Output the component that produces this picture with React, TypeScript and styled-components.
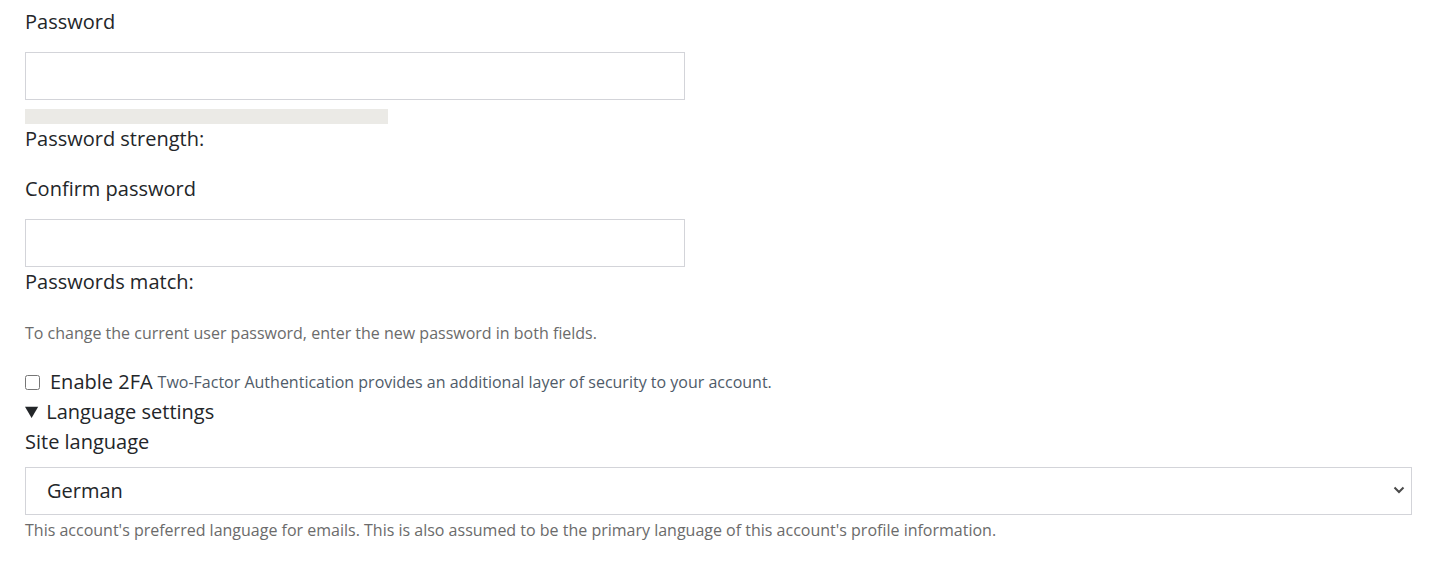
import styled, { createGlobalStyle } from "styled-components";

const GlobalStyle = createGlobalStyle`
    html, body {
        margin: 0;
        padding: 0;
        background: #fff;
    }
    body {
        font-family: "Open Sans", "DejaVu Sans", sans-serif;
        color: #232629;
    }
`;

const Form = styled.form`
    display: flex;
    flex-direction: column;
    padding: 9px 18px 0 25px;
`;

const Label = styled.label<{ gap?: number; top?: number }>`
    display: block;
    font-size: 20px;
    line-height: 26px;
    margin-top: ${(props) => props.top ?? 0}px;
    margin-bottom: ${(props) => props.gap ?? 0}px;
`;

const TextInput = styled.input`
    box-sizing: border-box;
    width: 660px;
    height: 48px;
    border: 1px solid #d3d4d9;
    border-radius: 0;
    padding: 0 20px;
    font-family: inherit;
    font-size: 18px;
    background: #fff;
    outline: none;
`;

const StrengthBar = styled.div`
    width: 363px;
    height: 15px;
    margin-top: 9px;
    background-color: #ebeae6;
`;

const Status = styled.div<{ top: number }>`
    font-size: 20px;
    line-height: 26px;
    margin-top: ${(props) => props.top}px;
`;

const Description = styled.div<{ top: number }>`
    font-size: 16px;
    line-height: 22px;
    color: #6b6b6b;
    margin-top: ${(props) => props.top}px;
`;

const CheckRow = styled.div`
    display: flex;
    align-items: center;
    margin-top: 25px;
    line-height: 26px;
`;

const Checkbox = styled.input.attrs({ type: "checkbox" })`
    width: 15px;
    height: 15px;
    margin: 0 10px 0 0;
    accent-color: #333;
`;

const CheckLabel = styled.span`
    font-size: 20px;
`;

const CheckHint = styled.span`
    font-size: 16px;
    color: #4f5b69;
    margin-left: 5px;
`;

const Details = styled.details`
    margin-top: 4px;
`;

const Summary = styled.summary`
    font-size: 20px;
    line-height: 26px;
    cursor: pointer;
    list-style-position: inside;
`;

const SelectWrap = styled.div`
    position: relative;
    margin-top: 12px;
`;

const Select = styled.select`
    box-sizing: border-box;
    display: block;
    width: 100%;
    height: 48px;
    border: 1px solid #d3d4d9;
    border-radius: 0;
    padding: 0 40px 2px 21px;
    font-family: inherit;
    font-size: 20px;
    color: #232629;
    background: #fff;
    outline: none;
    appearance: none;
`;

const Chevron = styled.svg`
    position: absolute;
    right: 7px;
    top: 19px;
    width: 12px;
    height: 8px;
    pointer-events: none;
`;

function App() {
    return (
        <>
            <GlobalStyle />
            <Form>
                <Label gap={17}>Password</Label>
                <TextInput type="password" />
                <StrengthBar />
                <Status top={2}>Password strength:</Status>

                <Label gap={17} top={24}>
                    Confirm password
                </Label>
                <TextInput type="password" />
                <Status top={2}>Passwords match:</Status>

                <Description top={27}>
                    To change the current user password, enter the new password in both fields.
                </Description>

                <CheckRow>
                    <Checkbox />
                    <CheckLabel>Enable 2FA</CheckLabel>
                    <CheckHint>Two-Factor Authentication provides an additional layer of security to your account.</CheckHint>
                </CheckRow>

                <Details open>
                    <Summary>Language settings</Summary>
                    <Label top={4}>Site language</Label>
                    <SelectWrap>
                        <Select defaultValue="de">
                            <option value="en">English</option>
                            <option value="de">German</option>
                        </Select>
                        <Chevron viewBox="0 0 12 8">
                            <path d="M1.5 1.5 L6 6 L10.5 1.5" fill="none" stroke="#4a4a4a" strokeWidth="2" />
                        </Chevron>
                    </SelectWrap>
                    <Description top={4}>
                        This account's preferred language for emails. This is also assumed to be the primary language of this account's profile information.
                    </Description>
                </Details>
            </Form>
        </>
    );
}

export default App;
